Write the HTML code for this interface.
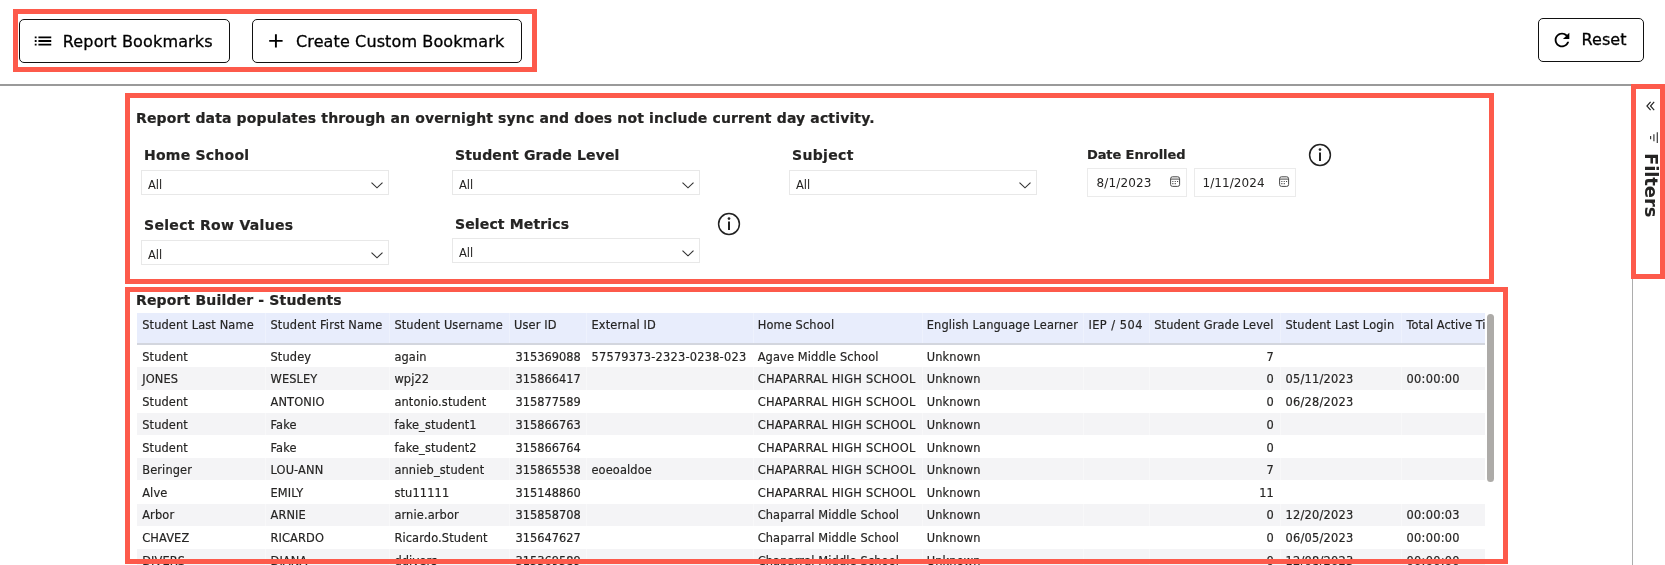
<!DOCTYPE html>
<html lang="en">
<head>
<meta charset="utf-8">
<title>Report Builder - Students</title>
<style>
*{box-sizing:border-box;margin:0;padding:0}
html,body{width:1665px;height:565px;overflow:hidden;background:#fff}
body{will-change:transform;position:relative;font-family:"DejaVu Sans","Liberation Sans",sans-serif;color:#252423}
.abs{position:absolute}
.red{position:absolute;border:5px solid #fd5a4b;pointer-events:none}
.btn{position:absolute;height:44px;border:1px solid #111;border-radius:5px;background:#fff;color:#000;font-size:16px;line-height:42px;white-space:nowrap}
.btn span{position:absolute;top:0;-webkit-text-stroke:0.3px #000}
.hline{position:absolute;left:0;top:84px;width:1632px;height:1.5px;background:#9a9a9a}
.vline{position:absolute;left:1632px;top:279px;width:1px;height:286px;background:#adadad}
.note{-webkit-text-stroke:0.2px #252423;position:absolute;left:136px;top:109px;letter-spacing:0.144px;font-size:14px;font-weight:bold;line-height:18px;white-space:nowrap}
.lbl{position:absolute;-webkit-text-stroke:0.2px #252423;font-size:14px;font-weight:bold;line-height:18px;white-space:nowrap}
.dd{position:absolute;height:25px;width:248px;border:1px solid #e8e8e8;background:#fff;font-size:11.5px;line-height:22px}
.dd span{position:absolute;left:6px;top:3.4px;line-height:22px}
.dd svg{position:absolute;right:5.5px;top:11.4px}
.date{position:absolute;height:29px;border:1px solid #ebebeb;background:#fff;font-size:12px}
.date span{position:absolute;top:2px;line-height:24px}
.date svg{position:absolute;top:7px}
.info{position:absolute}

.title{-webkit-text-stroke:0.2px #252423;position:absolute;left:136px;top:291px;letter-spacing:0.16px;font-size:14px;font-weight:bold;line-height:18px;white-space:nowrap}
#tbl{-webkit-text-stroke:0.18px #252423;font-size:11.4px;letter-spacing:0.13px;color:#252423}
.th-row{position:absolute;left:0;top:0;width:1348px;height:32px;background:#e8edfc;border-bottom:2px solid #d3d6de}
.th{position:absolute;top:0;height:30px;border-left:1px solid #eef2fd;overflow:hidden;white-space:nowrap}
.th span{position:absolute;left:4.2px;top:4.1px;line-height:16px}
.tr{position:absolute;left:0;width:1348px;height:22.67px;background:#fff}
.tr.alt{background:#f4f4f6}
.td{position:absolute;top:0;height:100%;overflow:hidden;white-space:nowrap;border-left:1px solid rgba(255,255,255,.4)}
.td span{position:absolute;left:4.2px;top:var(--t);line-height:16px}
.td.r span{left:auto;right:4.5px}
.sb{position:absolute;left:1486.5px;top:314px;width:7px;height:168px;border-radius:3.5px;background:#adaba8}
.th:first-child,.td:first-child{border-left:0}
.th:first-child span,.td:first-child span{left:5.2px}
</style>
</head>
<body>

<!-- top toolbar -->
<div class="btn" style="left:19px;top:19px;width:211px">
  <svg class="abs" style="left:12px;top:10px" width="22" height="22" viewBox="0 0 24 24"><path d="M3 13h2v-2H3v2zm0 4h2v-2H3v2zm0-8h2V7H3v2zm4 4h14v-2H7v2zm0 4h14v-2H7v2zM7 7v2h14V7H7z" fill="#000"/></svg>
  <span style="left:42.8px;top:1px;letter-spacing:0.15px">Report Bookmarks</span>
</div>
<div class="btn" style="left:252px;top:19px;width:270px">
  <svg class="abs" style="left:16px;top:14px" width="14" height="14" viewBox="0 0 14 14"><path d="M6.9 0.2V13.6M0.2 6.9H13.6" stroke="#000" stroke-width="1.9" fill="none"/></svg>
  <span style="left:43px;top:1px;letter-spacing:0.12px">Create Custom Bookmark</span>
</div>
<div class="btn" style="left:1538px;top:18px;width:106px">
  <svg class="abs" style="left:12px;top:10px" width="22" height="22" viewBox="0 0 24 24"><path d="M17.65 6.35C16.2 4.9 14.21 4 12 4c-4.42 0-7.99 3.58-7.99 8s3.57 8 7.99 8c3.73 0 6.84-2.55 7.73-6h-2.08c-.82 2.33-3.04 4-5.65 4-3.31 0-6-2.69-6-6s2.69-6 6-6c1.66 0 3.14.69 4.22 1.78L13 11h7V4l-2.35 2.35z" fill="#000"/></svg>
  <span style="left:42.6px;letter-spacing:0.04px">Reset</span>
</div>
<div class="red" style="left:13px;top:9px;width:524px;height:63px"></div>

<div class="hline"></div>
<div class="vline"></div>

<!-- filters side tab -->
<div class="abs" id="side" style="left:1636px;top:89px;width:24px;height:185px;background:#fff">
  <svg class="abs" style="left:10px;top:12px" width="9" height="10" viewBox="0 0 9 10"><path d="M4.6 0.8L0.9 5L4.6 9.2M8.2 0.8L4.5 5L8.2 9.2" stroke="#222" stroke-width="1.15" fill="none"/></svg>
  <svg class="abs" style="left:13px;top:43px" width="10" height="12" viewBox="0 0 10 12"><path d="M8.3 0.3V11M4.9 2.2V9.2M1.6 4V7.2" stroke="#3a3a3a" stroke-width="1.2" fill="none"/></svg>
  <div class="abs" style="left:7.8px;top:63.8px;width:14px;height:66px"><div style="position:absolute;left:0;top:0;transform-origin:0 0;transform:translate(18px,0) rotate(90deg);font-size:18px;font-weight:bold;line-height:22px;white-space:nowrap;color:#252423;letter-spacing:-0.1px">Filters</div></div>
</div>
<div class="red" style="left:1631px;top:84px;width:34px;height:195px"></div>

<!-- filter panel -->
<div class="note">Report data populates through an overnight sync and does not include current day activity.</div>

<div class="lbl" style="left:144px;top:146px;letter-spacing:0.24px">Home School</div>
<div class="dd" style="left:141px;top:170px"><span>All</span><svg width="12" height="7" viewBox="0 0 12 7"><path d="M0.5 0.6L6 5.8L11.5 0.6" stroke="#333" stroke-width="1.15" fill="none"/></svg></div>

<div class="lbl" style="left:455px;top:146px;letter-spacing:0.14px">Student Grade Level</div>
<div class="dd" style="left:452px;top:170px"><span>All</span><svg width="12" height="7" viewBox="0 0 12 7"><path d="M0.5 0.6L6 5.8L11.5 0.6" stroke="#333" stroke-width="1.15" fill="none"/></svg></div>

<div class="lbl" style="left:792px;top:146px;letter-spacing:0.34px">Subject</div>
<div class="dd" style="left:789px;top:170px"><span>All</span><svg width="12" height="7" viewBox="0 0 12 7"><path d="M0.5 0.6L6 5.8L11.5 0.6" stroke="#333" stroke-width="1.15" fill="none"/></svg></div>

<div class="lbl" style="left:1087px;top:146px;font-size:13px;letter-spacing:-0.1px">Date Enrolled</div>
<div class="date" style="left:1087px;top:168px;width:100px"><span style="left:8.5px;letter-spacing:0.15px">8/1/2023</span>
  <svg style="left:82px" width="11" height="12" viewBox="0 0 11 12"><rect x="0.6" y="0.8" width="9" height="9.6" rx="1.9" fill="none" stroke="#484848" stroke-width="1"/><path d="M0.6 3.1H9.6" stroke="#484848" stroke-width="1"/><path d="M2.3 5.5h1.1M4.7 5.5h1.1M7 5.5h1.1M2.3 7.6h1.1M4.7 7.6h1.1" stroke="#484848" stroke-width="1.1"/></svg></div>
<div class="date" style="left:1194px;top:168px;width:102px"><span style="left:7.5px;letter-spacing:0.07px">1/11/2024</span>
  <svg style="left:84px" width="11" height="12" viewBox="0 0 11 12"><rect x="0.6" y="0.8" width="9" height="9.6" rx="1.9" fill="none" stroke="#484848" stroke-width="1"/><path d="M0.6 3.1H9.6" stroke="#484848" stroke-width="1"/><path d="M2.3 5.5h1.1M4.7 5.5h1.1M7 5.5h1.1M2.3 7.6h1.1M4.7 7.6h1.1" stroke="#484848" stroke-width="1.1"/></svg></div>
<svg class="info" style="left:1308px;top:143px" width="24" height="24" viewBox="0 0 24 24"><circle cx="12" cy="12" r="10.4" fill="none" stroke="#222" stroke-width="1.5"/><circle cx="12" cy="6.6" r="1.35" fill="#222"/><path d="M12 9.4V18" stroke="#222" stroke-width="2"/></svg>

<div class="lbl" style="left:144px;top:216px;letter-spacing:0.32px">Select Row Values</div>
<div class="dd" style="left:141px;top:240px"><span>All</span><svg width="12" height="7" viewBox="0 0 12 7"><path d="M0.5 0.6L6 5.8L11.5 0.6" stroke="#333" stroke-width="1.15" fill="none"/></svg></div>

<div class="lbl" style="left:455px;top:215px;letter-spacing:0.14px">Select Metrics</div>
<div class="dd" style="left:452px;top:238px"><span>All</span><svg width="12" height="7" viewBox="0 0 12 7"><path d="M0.5 0.6L6 5.8L11.5 0.6" stroke="#333" stroke-width="1.15" fill="none"/></svg></div>
<svg class="info" style="left:717px;top:212px" width="24" height="24" viewBox="0 0 24 24"><circle cx="12" cy="12" r="10.4" fill="none" stroke="#222" stroke-width="1.5"/><circle cx="12" cy="6.6" r="1.35" fill="#222"/><path d="M12 9.4V18" stroke="#222" stroke-width="2"/></svg>

<div class="red" style="left:125px;top:93px;width:1369px;height:191px"></div>

<div class="title">Report Builder - Students</div>
<!-- TABLE -->
<div id="tbl" style="position:absolute;left:137px;top:313px;width:1348px;height:252px;overflow:hidden">
<div class="th-row">
<div class="th" style="left:0.0px;width:128.3px"><span>Student Last Name</span></div>
<div class="th" style="left:128.3px;width:123.9px"><span>Student First Name</span></div>
<div class="th" style="left:252.2px;width:119.7px"><span>Student Username</span></div>
<div class="th" style="left:371.9px;width:77.4px"><span>User ID</span></div>
<div class="th" style="left:449.3px;width:166.2px"><span>External ID</span></div>
<div class="th" style="left:615.5px;width:169.1px"><span>Home School</span></div>
<div class="th" style="left:784.6px;width:161.6px"><span>English Language Learner</span></div>
<div class="th" style="left:946.2px;width:65.8px"><span style="letter-spacing:.47px">IEP / 504</span></div>
<div class="th" style="left:1012.0px;width:131.2px"><span>Student Grade Level</span></div>
<div class="th" style="left:1143.2px;width:121.2px"><span>Student Last Login</span></div>
<div class="th" style="left:1264.4px;width:83.6px"><span style="letter-spacing:0">Total Active Time</span></div>
</div>
<div class="tr" style="top:32.0px;height:22.4px;--t:4.0px">
<div class="td" style="left:0.0px;width:128.3px"><span>Student</span></div>
<div class="td" style="left:128.3px;width:123.9px"><span>Studey</span></div>
<div class="td" style="left:252.2px;width:119.7px"><span>again</span></div>
<div class="td r" style="left:371.9px;width:77.4px"><span style="right:5.4px;letter-spacing:.03px">315369088</span></div>
<div class="td" style="left:449.3px;width:166.2px"><span style="letter-spacing:.22px">57579373-2323-0238-023</span></div>
<div class="td" style="left:615.5px;width:169.1px"><span>Agave Middle School</span></div>
<div class="td" style="left:784.6px;width:161.6px"><span>Unknown</span></div>
<div class="td" style="left:946.2px;width:65.8px"><span></span></div>
<div class="td r" style="left:1012.0px;width:131.2px"><span style="right:6.2px">7</span></div>
<div class="td" style="left:1143.2px;width:121.2px"><span></span></div>
<div class="td" style="left:1264.4px;width:83.6px"><span></span></div>
</div>
<div class="tr alt" style="top:54.4px;height:22.6px;--t:3.6px">
<div class="td" style="left:0.0px;width:128.3px"><span>JONES</span></div>
<div class="td" style="left:128.3px;width:123.9px"><span>WESLEY</span></div>
<div class="td" style="left:252.2px;width:119.7px"><span>wpj22</span></div>
<div class="td r" style="left:371.9px;width:77.4px"><span style="right:5.4px;letter-spacing:.03px">315866417</span></div>
<div class="td" style="left:449.3px;width:166.2px"><span></span></div>
<div class="td" style="left:615.5px;width:169.1px"><span style="letter-spacing:.27px">CHAPARRAL HIGH SCHOOL</span></div>
<div class="td" style="left:784.6px;width:161.6px"><span>Unknown</span></div>
<div class="td" style="left:946.2px;width:65.8px"><span></span></div>
<div class="td r" style="left:1012.0px;width:131.2px"><span style="right:6.2px">0</span></div>
<div class="td" style="left:1143.2px;width:121.2px"><span style="letter-spacing:.26px">05/11/2023</span></div>
<div class="td" style="left:1264.4px;width:83.6px"><span style="letter-spacing:.26px">00:00:00</span></div>
</div>
<div class="tr" style="top:77.0px;height:22.7px;--t:4.0px">
<div class="td" style="left:0.0px;width:128.3px"><span>Student</span></div>
<div class="td" style="left:128.3px;width:123.9px"><span>ANTONIO</span></div>
<div class="td" style="left:252.2px;width:119.7px"><span>antonio.student</span></div>
<div class="td r" style="left:371.9px;width:77.4px"><span style="right:5.4px;letter-spacing:.03px">315877589</span></div>
<div class="td" style="left:449.3px;width:166.2px"><span></span></div>
<div class="td" style="left:615.5px;width:169.1px"><span style="letter-spacing:.27px">CHAPARRAL HIGH SCHOOL</span></div>
<div class="td" style="left:784.6px;width:161.6px"><span>Unknown</span></div>
<div class="td" style="left:946.2px;width:65.8px"><span></span></div>
<div class="td r" style="left:1012.0px;width:131.2px"><span style="right:6.2px">0</span></div>
<div class="td" style="left:1143.2px;width:121.2px"><span style="letter-spacing:.26px">06/28/2023</span></div>
<div class="td" style="left:1264.4px;width:83.6px"><span></span></div>
</div>
<div class="tr alt" style="top:99.7px;height:22.0px;--t:4.3px">
<div class="td" style="left:0.0px;width:128.3px"><span>Student</span></div>
<div class="td" style="left:128.3px;width:123.9px"><span>Fake</span></div>
<div class="td" style="left:252.2px;width:119.7px"><span>fake_student1</span></div>
<div class="td r" style="left:371.9px;width:77.4px"><span style="right:5.4px;letter-spacing:.03px">315866763</span></div>
<div class="td" style="left:449.3px;width:166.2px"><span></span></div>
<div class="td" style="left:615.5px;width:169.1px"><span style="letter-spacing:.27px">CHAPARRAL HIGH SCHOOL</span></div>
<div class="td" style="left:784.6px;width:161.6px"><span>Unknown</span></div>
<div class="td" style="left:946.2px;width:65.8px"><span></span></div>
<div class="td r" style="left:1012.0px;width:131.2px"><span style="right:6.2px">0</span></div>
<div class="td" style="left:1143.2px;width:121.2px"><span></span></div>
<div class="td" style="left:1264.4px;width:83.6px"><span></span></div>
</div>
<div class="tr" style="top:121.7px;height:23.7px;--t:5.3px">
<div class="td" style="left:0.0px;width:128.3px"><span>Student</span></div>
<div class="td" style="left:128.3px;width:123.9px"><span>Fake</span></div>
<div class="td" style="left:252.2px;width:119.7px"><span>fake_student2</span></div>
<div class="td r" style="left:371.9px;width:77.4px"><span style="right:5.4px;letter-spacing:.03px">315866764</span></div>
<div class="td" style="left:449.3px;width:166.2px"><span></span></div>
<div class="td" style="left:615.5px;width:169.1px"><span style="letter-spacing:.27px">CHAPARRAL HIGH SCHOOL</span></div>
<div class="td" style="left:784.6px;width:161.6px"><span>Unknown</span></div>
<div class="td" style="left:946.2px;width:65.8px"><span></span></div>
<div class="td r" style="left:1012.0px;width:131.2px"><span style="right:6.2px">0</span></div>
<div class="td" style="left:1143.2px;width:121.2px"><span></span></div>
<div class="td" style="left:1264.4px;width:83.6px"><span></span></div>
</div>
<div class="tr alt" style="top:145.4px;height:21.3px;--t:3.6px">
<div class="td" style="left:0.0px;width:128.3px"><span>Beringer</span></div>
<div class="td" style="left:128.3px;width:123.9px"><span>LOU-ANN</span></div>
<div class="td" style="left:252.2px;width:119.7px"><span>annieb_student</span></div>
<div class="td r" style="left:371.9px;width:77.4px"><span style="right:5.4px;letter-spacing:.03px">315865538</span></div>
<div class="td" style="left:449.3px;width:166.2px"><span>eoeoaldoe</span></div>
<div class="td" style="left:615.5px;width:169.1px"><span style="letter-spacing:.27px">CHAPARRAL HIGH SCHOOL</span></div>
<div class="td" style="left:784.6px;width:161.6px"><span>Unknown</span></div>
<div class="td" style="left:946.2px;width:65.8px"><span></span></div>
<div class="td r" style="left:1012.0px;width:131.2px"><span style="right:6.2px">7</span></div>
<div class="td" style="left:1143.2px;width:121.2px"><span></span></div>
<div class="td" style="left:1264.4px;width:83.6px"><span></span></div>
</div>
<div class="tr" style="top:166.7px;height:24.1px;--t:5.3px">
<div class="td" style="left:0.0px;width:128.3px"><span>Alve</span></div>
<div class="td" style="left:128.3px;width:123.9px"><span>EMILY</span></div>
<div class="td" style="left:252.2px;width:119.7px"><span>stu11111</span></div>
<div class="td r" style="left:371.9px;width:77.4px"><span style="right:5.4px;letter-spacing:.03px">315148860</span></div>
<div class="td" style="left:449.3px;width:166.2px"><span></span></div>
<div class="td" style="left:615.5px;width:169.1px"><span style="letter-spacing:.27px">CHAPARRAL HIGH SCHOOL</span></div>
<div class="td" style="left:784.6px;width:161.6px"><span>Unknown</span></div>
<div class="td" style="left:946.2px;width:65.8px"><span></span></div>
<div class="td r" style="left:1012.0px;width:131.2px"><span style="right:6.2px">11</span></div>
<div class="td" style="left:1143.2px;width:121.2px"><span></span></div>
<div class="td" style="left:1264.4px;width:83.6px"><span></span></div>
</div>
<div class="tr alt" style="top:190.8px;height:22.2px;--t:3.2px">
<div class="td" style="left:0.0px;width:128.3px"><span>Arbor</span></div>
<div class="td" style="left:128.3px;width:123.9px"><span>ARNIE</span></div>
<div class="td" style="left:252.2px;width:119.7px"><span>arnie.arbor</span></div>
<div class="td r" style="left:371.9px;width:77.4px"><span style="right:5.4px;letter-spacing:.03px">315858708</span></div>
<div class="td" style="left:449.3px;width:166.2px"><span></span></div>
<div class="td" style="left:615.5px;width:169.1px"><span>Chaparral Middle School</span></div>
<div class="td" style="left:784.6px;width:161.6px"><span>Unknown</span></div>
<div class="td" style="left:946.2px;width:65.8px"><span></span></div>
<div class="td r" style="left:1012.0px;width:131.2px"><span style="right:6.2px">0</span></div>
<div class="td" style="left:1143.2px;width:121.2px"><span style="letter-spacing:.26px">12/20/2023</span></div>
<div class="td" style="left:1264.4px;width:83.6px"><span style="letter-spacing:.26px">00:00:03</span></div>
</div>
<div class="tr" style="top:213.0px;height:23.0px;--t:4.0px">
<div class="td" style="left:0.0px;width:128.3px"><span>CHAVEZ</span></div>
<div class="td" style="left:128.3px;width:123.9px"><span>RICARDO</span></div>
<div class="td" style="left:252.2px;width:119.7px"><span>Ricardo.Student</span></div>
<div class="td r" style="left:371.9px;width:77.4px"><span style="right:5.4px;letter-spacing:.03px">315647627</span></div>
<div class="td" style="left:449.3px;width:166.2px"><span></span></div>
<div class="td" style="left:615.5px;width:169.1px"><span>Chaparral Middle School</span></div>
<div class="td" style="left:784.6px;width:161.6px"><span>Unknown</span></div>
<div class="td" style="left:946.2px;width:65.8px"><span></span></div>
<div class="td r" style="left:1012.0px;width:131.2px"><span style="right:6.2px">0</span></div>
<div class="td" style="left:1143.2px;width:121.2px"><span style="letter-spacing:.26px">06/05/2023</span></div>
<div class="td" style="left:1264.4px;width:83.6px"><span style="letter-spacing:.26px">00:00:00</span></div>
</div>
<div class="tr alt" style="top:236.0px;height:22.7px;--t:4.0px">
<div class="td" style="left:0.0px;width:128.3px"><span>DIVERS</span></div>
<div class="td" style="left:128.3px;width:123.9px"><span>DIANA</span></div>
<div class="td" style="left:252.2px;width:119.7px"><span>ddivers</span></div>
<div class="td r" style="left:371.9px;width:77.4px"><span style="right:5.4px;letter-spacing:.03px">315369589</span></div>
<div class="td" style="left:449.3px;width:166.2px"><span></span></div>
<div class="td" style="left:615.5px;width:169.1px"><span>Chaparral Middle School</span></div>
<div class="td" style="left:784.6px;width:161.6px"><span>Unknown</span></div>
<div class="td" style="left:946.2px;width:65.8px"><span></span></div>
<div class="td r" style="left:1012.0px;width:131.2px"><span style="right:6.2px">0</span></div>
<div class="td" style="left:1143.2px;width:121.2px"><span style="letter-spacing:.26px">12/08/2023</span></div>
<div class="td" style="left:1264.4px;width:83.6px"><span style="letter-spacing:.26px">00:00:00</span></div>
</div>
</div>
<div class="sb"></div>
<!-- /TABLE -->

<div class="red" style="left:125px;top:287px;width:1383px;height:277px"></div>
</body>
</html>
